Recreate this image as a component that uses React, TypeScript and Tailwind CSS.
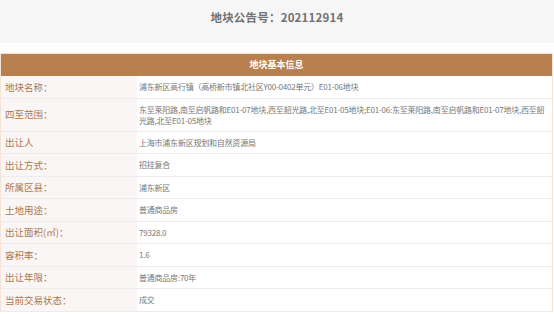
const rows: { label: string; value: string; tall?: boolean }[] = [
  { label: '地块名称：', value: '浦东新区高行镇（高桥新市镇北社区Y00-0402单元）E01-06地块' },
  {
    label: '四至范围：',
    value:
      '东至莱阳路,南至启帆路和E01-07地块,西至韶光路,北至E01-05地块;E01-06:东至莱阳路,南至启帆路和E01-07地块,西至韶光路,北至E01-05地块',
    tall: true,
  },
  { label: '出让人', value: '上海市浦东新区规划和自然资源局' },
  { label: '出让方式：', value: '招挂复合' },
  { label: '所属区县：', value: '浦东新区' },
  { label: '土地用途：', value: '普通商品房' },
  { label: '出让面积(㎡)：', value: '79328.0' },
  { label: '容积率：', value: '1.6' },
  { label: '出让年限：', value: '普通商品房:70年' },
  { label: '当前交易状态：', value: '成交' },
];

export default function App() {
  return (
    <div
      className="w-[554px] h-[314px] bg-white overflow-hidden"
      style={{ fontFamily: '"Noto Sans CJK SC", "Noto Sans", sans-serif' }}
    >
      <div className="h-[43px] bg-[#f6f6f6] flex items-center justify-center">
        <h1 className="text-[11.5px] font-bold text-[#727272] tracking-[0.2px] -mt-[8px]">
          地块公告号：202112914
        </h1>
      </div>

      <div className="mt-[10px] mr-[1px] border-t border-l border-r border-[#f3e4d6]">
        <div className="h-[22px] bg-[#b8804f] flex items-center justify-center text-white text-[9px] font-bold">
          地块基本信息
        </div>
        {rows.map((row, index) => (
          <div
            key={index}
            className={`flex border-b border-[#ececec] ${row.tall ? 'h-[33px]' : 'h-[22.5px]'}`}
          >
            <div className="w-[136px] shrink-0 bg-[#f9f6f5] flex items-center pl-[4px] text-[9.5px] text-[#ad774c]">
              {row.label}
            </div>
            <div className="flex-1 flex items-center pl-[2px] pr-[1px] text-[8px] leading-[11px] tracking-[-0.22px] text-[#777777]">
              {row.value}
            </div>
          </div>
        ))}
      </div>
    </div>
  );
}
